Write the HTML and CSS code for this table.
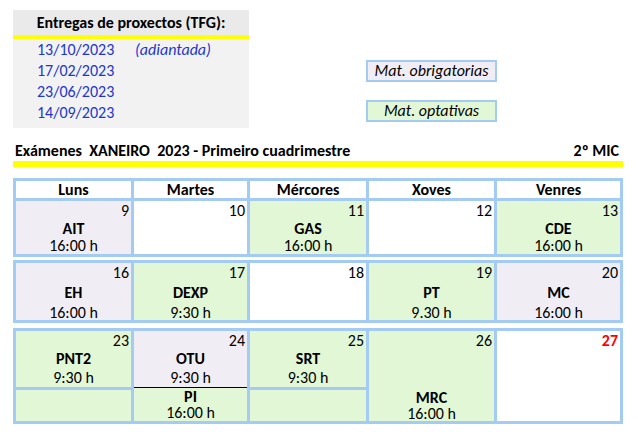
FILE: index.html
```html
<!DOCTYPE html>
<html lang="gl">
<head>
<meta charset="utf-8">
<title>Exámenes XANEIRO 2023</title>
<link rel="stylesheet" href="styles.css">
</head>
<body>
<div class="page">
  <div class="top">
    <div class="tfg">
      <div class="tfg-head">Entregas de proxectos (TFG):</div>
      <div class="tfg-list">
        <span>13/10/2023</span><span class="note">(adiantada)</span>
        <span>17/02/2023</span><span></span>
        <span>23/06/2023</span><span></span>
        <span>14/09/2023</span><span></span>
      </div>
    </div>
    <div class="legend">
      <div class="key grey">Mat. obrigatorias</div>
      <div class="key green">Mat. optativas</div>
    </div>
  </div>

  <div class="title"><span>Exámenes  XANEIRO  2023 - Primeiro cuadrimestre</span><span>2º MIC</span></div>
  <div class="bar"></div>

  <div class="calendar">
    <div class="week w1">
      <div class="day">Luns</div>
      <div class="day">Martes</div>
      <div class="day">Mércores</div>
      <div class="day">Xoves</div>
      <div class="day">Venres</div>

      <div class="cell grey"><div class="num">9</div><div class="name">AIT</div><div class="time">16:00 h</div></div>
      <div class="cell white"><div class="num">10</div></div>
      <div class="cell green"><div class="num">11</div><div class="name">GAS</div><div class="time">16:00 h</div></div>
      <div class="cell white"><div class="num">12</div></div>
      <div class="cell green"><div class="num">13</div><div class="name">CDE</div><div class="time">16:00 h</div></div>
    </div>

    <div class="week w2">
      <div class="cell grey"><div class="num">16</div><div class="name">EH</div><div class="time">16:00 h</div></div>
      <div class="cell green"><div class="num">17</div><div class="name">DEXP</div><div class="time">9:30 h</div></div>
      <div class="cell white"><div class="num">18</div></div>
      <div class="cell green"><div class="num">19</div><div class="name">PT</div><div class="time">9.30 h</div></div>
      <div class="cell grey"><div class="num">20</div><div class="name">MC</div><div class="time">16:00 h</div></div>
    </div>

    <div class="week w3">
      <div class="cell green c1"><div class="num">23</div><div class="name">PNT2</div><div class="time">9:30 h</div></div>
      <div class="cell split c2">
        <div class="upper grey"><div class="num">24</div><div class="name">OTU</div><div class="time">9:30 h</div></div>
        <div class="lower green"><div class="name">PI</div><div class="time">16:00 h</div></div>
      </div>
      <div class="cell green c3"><div class="num">25</div><div class="name">SRT</div><div class="time">9:30 h</div></div>
      <div class="cell green c4 tall"><div class="num">26</div><div class="name">MRC</div><div class="time">16:00 h</div></div>
      <div class="cell white c5 tall"><div class="num red">27</div></div>
      <div class="cell green c1 r2"></div>
      <div class="cell green c3 r2"></div>
    </div>
  </div>
</div>
</body>
</html>
```

FILE: styles.css
```css
body {
  margin: 0;
  background: #ffffff;
  color: #000000;
  font-family: "Carlito", "Lato", sans-serif;
  font-size: 16px;
}

.page {
  width: 610px;
  padding: 10px 0 0 13px;
}

/* ---------- top block ---------- */
.top {
  display: flex;
}

.tfg {
  width: 236px;
  height: 118px;
  background: #f2f2f2;
}

.tfg-head {
  height: 25px;
  line-height: 25px;
  background: #eaeaea;
  border-bottom: 4px solid #ffff00;
  text-align: center;
  font-weight: bold;
}

.tfg-list {
  display: grid;
  grid-template-columns: 98px auto;
  padding-left: 24px;
  line-height: 21px;
  color: #2136cc;
}

.note {
  font-style: italic;
}

.legend {
  display: flex;
  flex-direction: column;
  gap: 18px;
  margin-left: 117px;
  padding-top: 50px;
}

.key {
  box-sizing: border-box;
  width: 131px;
  height: 22px;
  line-height: 18px;
  border: 2px solid #a4cbf3;
  font-style: italic;
  text-align: center;
}

/* ---------- title ---------- */
.title {
  display: flex;
  justify-content: space-between;
  margin-top: 13px;
  padding: 0 4px 0 2px;
  line-height: 20px;
  font-weight: bold;
  white-space: pre;
}

.bar {
  height: 6px;
  background: #ffff00;
}

/* ---------- calendar ---------- */
.calendar {
  margin-top: 11px;
}

.week {
  display: grid;
  grid-template-columns: 115px 113px 116px 125px 123px;
  gap: 3px;
  padding: 3px;
  background: #a4cbf3;
}

.w1 {
  grid-template-rows: 17px 53px;
}

.w2 {
  grid-template-rows: 57px;
  margin-top: 3px;
}

.w3 {
  grid-template-rows: 56px 31px;
  margin-top: 5px;
}

.day {
  background: #ffffff;
  font-weight: bold;
  text-align: center;
  line-height: 17px;
}

.cell {
  display: flex;
  flex-direction: column;
}

.grey { background: #f0eef4; }
.green { background: #e2f7d5; }
.white { background: #ffffff; }

.num {
  text-align: right;
  padding-right: 2px;
}

.name {
  text-align: center;
  font-weight: bold;
}

.time {
  text-align: center;
}

.red {
  color: #ff0000;
  font-weight: bold;
}

/* week 1 rows */
.w1 .num { height: 20px; line-height: 20px; }
.w1 .name { height: 16px; line-height: 16px; }
.w1 .time { height: 17px; line-height: 17px; }

/* week 2 rows */
.w2 .num { height: 20px; line-height: 20px; }
.w2 .name { height: 20px; line-height: 20px; }
.w2 .time { height: 17px; line-height: 19px; }

/* week 3 rows */
.w3 .num { height: 20px; line-height: 20px; }
.w3 .name { height: 16px; line-height: 16px; }
.w3 .time { height: 20px; line-height: 22px; }

.c1 { grid-column: 1; }
.c2 { grid-column: 2; grid-row: 1 / span 2; }
.c3 { grid-column: 3; }
.c4 { grid-column: 4; grid-row: 1 / span 2; }
.c5 { grid-column: 5; grid-row: 1 / span 2; }
.r2 { grid-row: 2; }
.w3 .c1:not(.r2), .w3 .c3:not(.r2) { grid-row: 1; }

.split {
  background: #e2f7d5;
}

.upper {
  height: 56px;
  border-bottom: 1px solid #000000;
}

.w3 .lower .name { height: 17px; line-height: 17px; }
.w3 .lower .time { height: 16px; line-height: 16px; }

.tall .name {
  margin-top: auto;
}

.w3 .tall .name { height: 16px; line-height: 16px; }
.w3 .tall .time { height: 15px; line-height: 15px; }
```
